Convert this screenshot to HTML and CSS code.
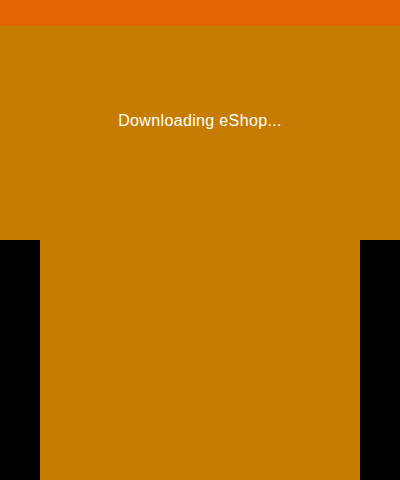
FILE: index.html
```html
<!DOCTYPE html>
<html>
<head>
<meta charset="utf-8">
<link rel="stylesheet" href="styles.css">
</head>
<body>
<div class="top">
  <div class="bar"></div>
  <div class="msg">Downloading eShop...</div>
</div>
<div class="bottom-row">
  <div class="bottom"></div>
</div>
</body>
</html>
```
FILE: styles.css
```css
html, body {
  margin: 0;
  padding: 0;
  background: #000;
  width: 400px;
  height: 480px;
  overflow: hidden;
}
.top {
  width: 400px;
  height: 240px;
  background: #C67C00;
  display: flex;
  flex-direction: column;
}
.bar {
  height: 26px;
  background: #E06400;
}
.msg {
  margin-top: 85px;
  text-align: center;
  color: #fff;
  font-family: "Liberation Sans", Arial, sans-serif;
  font-size: 16px;
  line-height: 20px;
  letter-spacing: 0.35px;
}
.bottom-row {
  display: flex;
  justify-content: center;
  height: 240px;
}
.bottom {
  width: 320px;
  height: 240px;
  background: #C67C00;
}
```
